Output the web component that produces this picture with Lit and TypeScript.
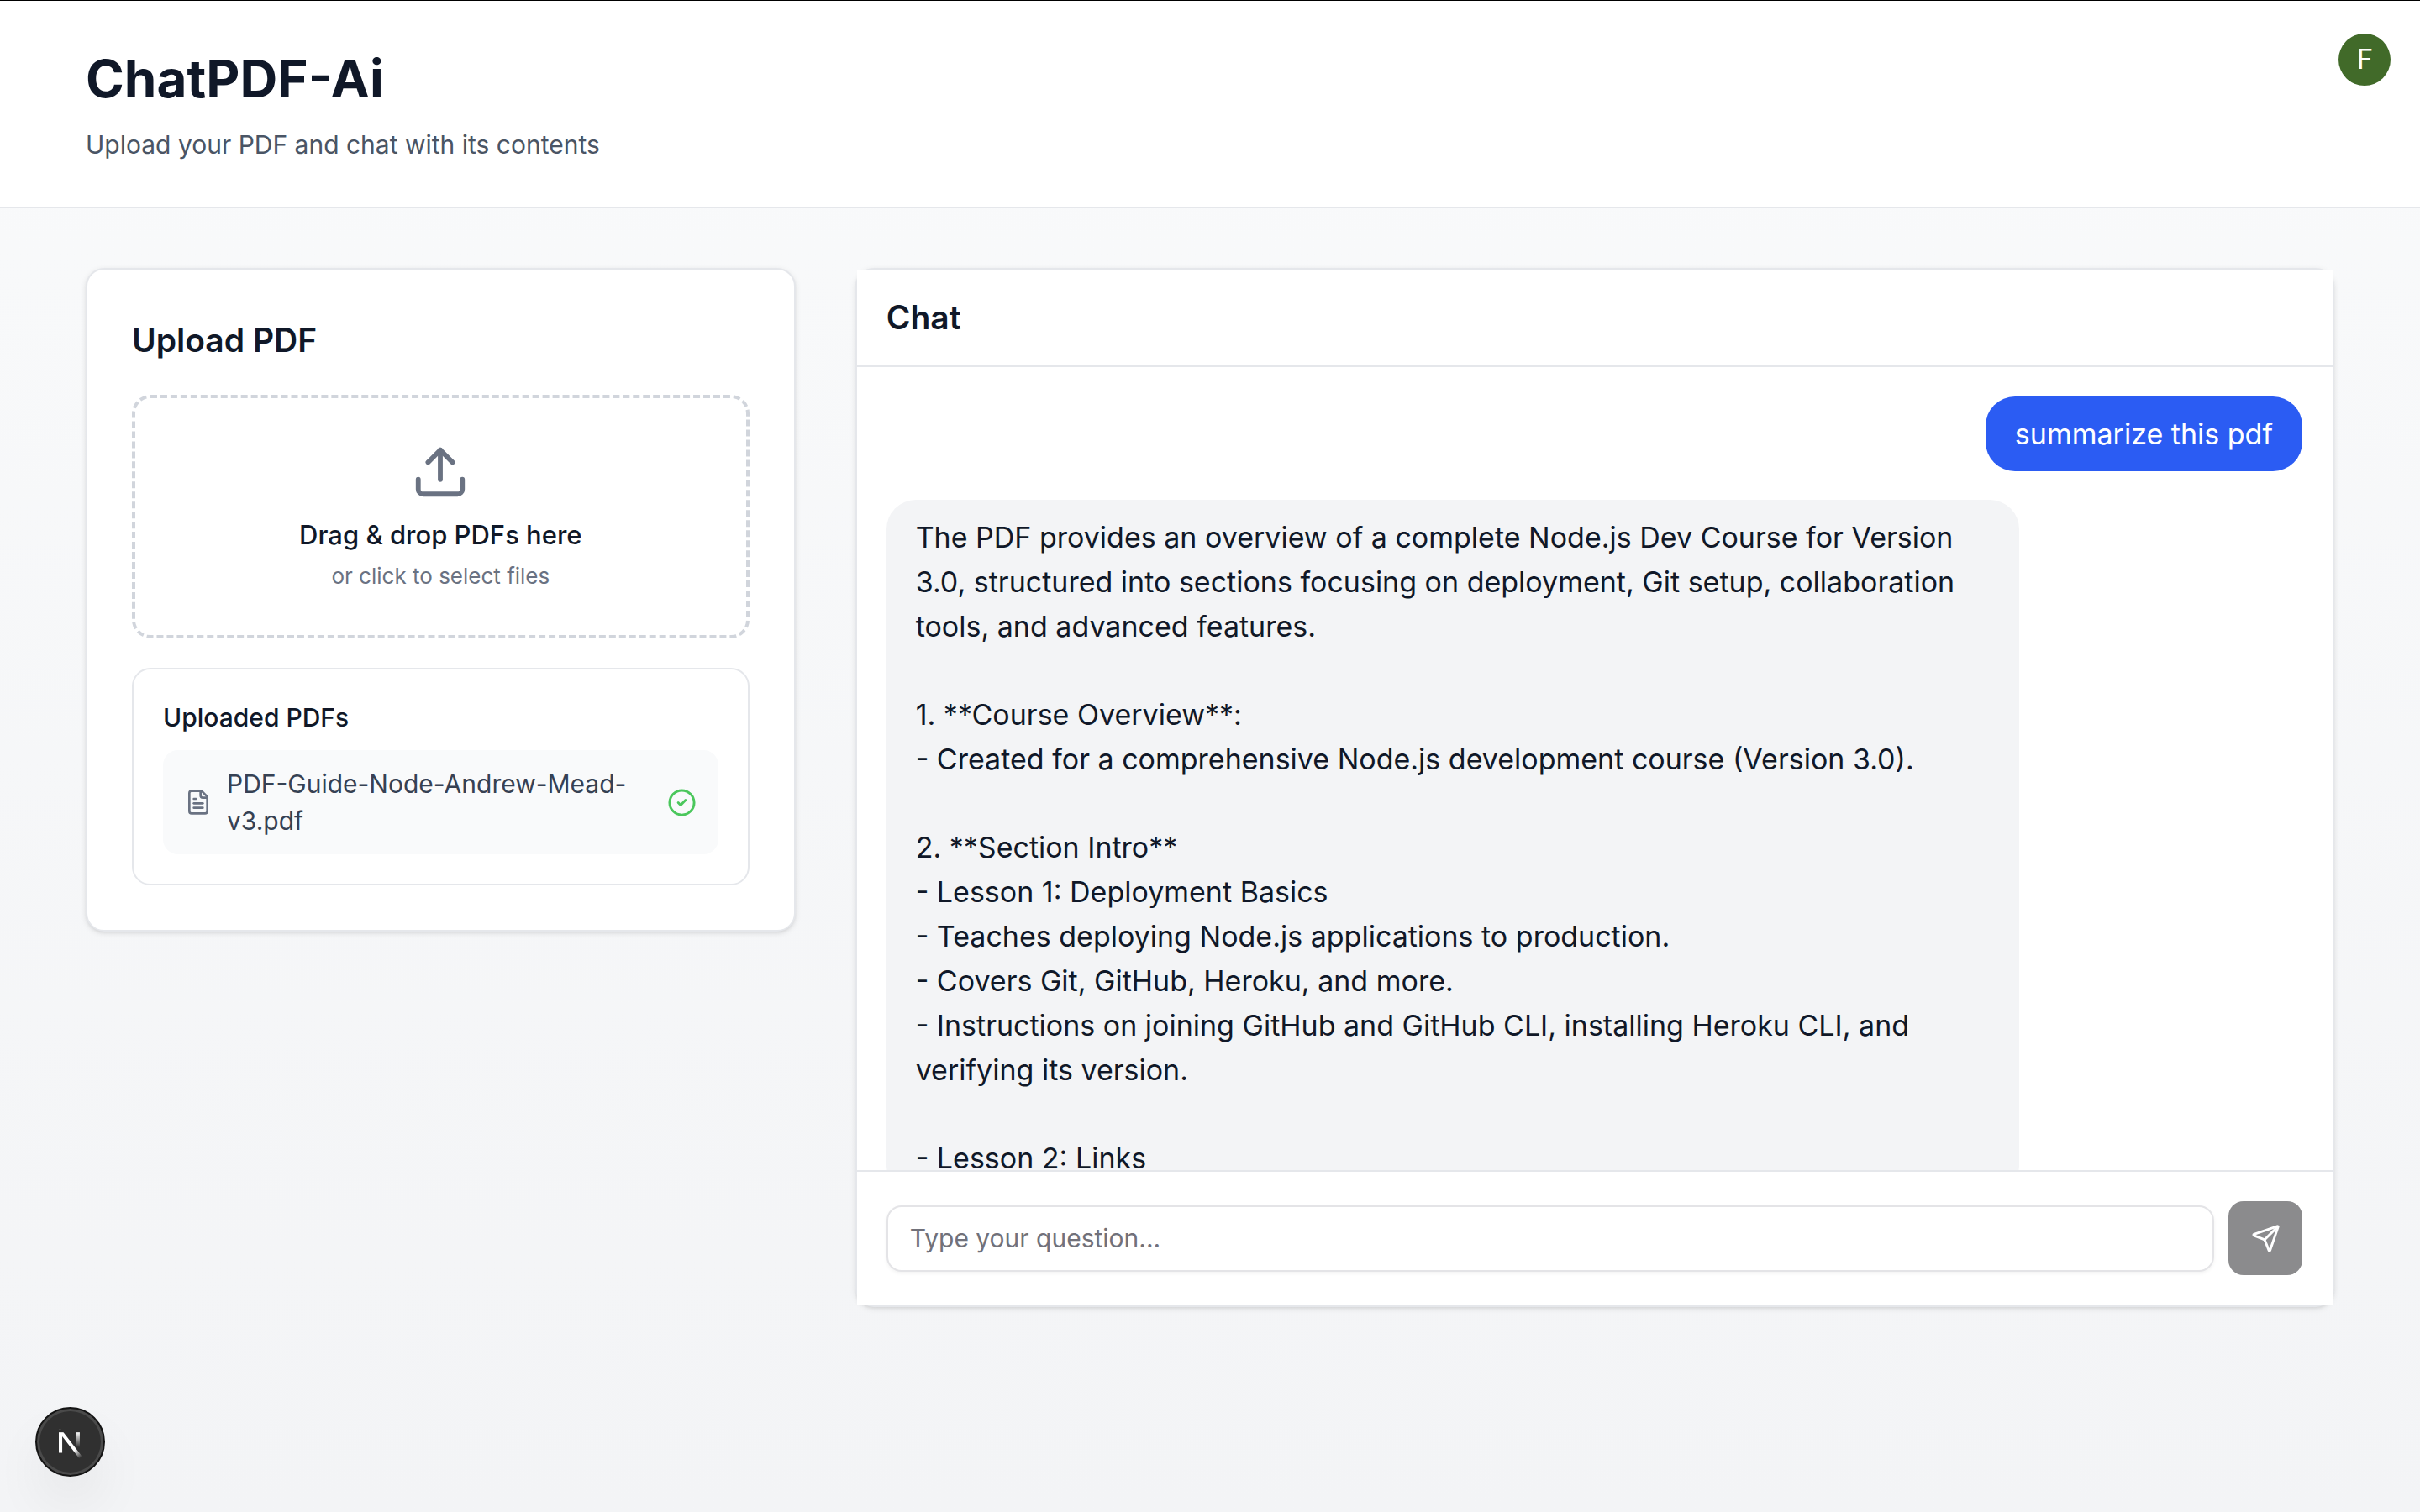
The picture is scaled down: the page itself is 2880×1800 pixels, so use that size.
import { LitElement, html, css, svg } from "lit";
import { customElement, property } from "lit/decorators.js";

const ICONS = {
  upload: svg`<path d="M12 3v12" /><path d="m17 8-5-5-5 5" /><path d="M21 15v4a2 2 0 0 1-2 2H5a2 2 0 0 1-2-2v-4" />`,
  file: svg`<path d="M15 2H6a2 2 0 0 0-2 2v16a2 2 0 0 0 2 2h12a2 2 0 0 0 2-2V7Z" /><path d="M14 2v4a2 2 0 0 0 2 2h4" /><path d="M10 9H8" /><path d="M16 13H8" /><path d="M16 17H8" />`,
  check: svg`<circle cx="12" cy="12" r="10" /><path d="m9 12 2 2 4-4" />`,
  send: svg`<path d="M14.536 21.686a.5.5 0 0 0 .937-.024l6.5-19a.496.496 0 0 0-.635-.635l-19 6.5a.5.5 0 0 0-.024.937l7.93 3.18a2 2 0 0 1 1.112 1.11z" /><path d="m21.854 2.147-10.94 10.939" />`,
};

type IconName = keyof typeof ICONS;

interface Message {
  role: "user" | "assistant";
  blocks: string[][];
}

const FILES = ["PDF-Guide-Node-Andrew-Mead-v3.pdf"];

const MESSAGES: Message[] = [
  { role: "user", blocks: [["summarize this pdf"]] },
  {
    role: "assistant",
    blocks: [
      [
        "The PDF provides an overview of a complete Node.js Dev Course for Version 3.0, structured into sections focusing on deployment, Git setup, collaboration tools, and advanced features.",
      ],
      [
        "1. **Course Overview**:",
        "- Created for a comprehensive Node.js development course (Version 3.0).",
      ],
      [
        "2. **Section Intro**",
        "- Lesson 1: Deployment Basics",
        "- Teaches deploying Node.js applications to production.",
        "- Covers Git, GitHub, Heroku, and more.",
        "- Instructions on joining GitHub and GitHub CLI, installing Heroku CLI, and verifying its version.",
      ],
      ["- Lesson 2: Links"],
    ],
  },
];

@customElement("line-icon")
class LineIcon extends LitElement {
  @property() name: IconName = "file";

  static styles = css`
    :host {
      display: block;
      flex: none;
    }
    svg {
      display: block;
      width: 100%;
      height: 100%;
      fill: none;
      stroke: currentColor;
      stroke-width: 2;
      stroke-linecap: round;
      stroke-linejoin: round;
    }
  `;

  render() {
    return html`<svg viewBox="0 0 24 24" aria-hidden="true">${ICONS[this.name]}</svg>`;
  }
}

@customElement("upload-panel")
class UploadPanel extends LitElement {
  static styles = css`
    :host {
      display: block;
      box-sizing: border-box;
      padding: 53px;
      border: 2px solid #e5e7eb;
      border-radius: 22px;
      background: #fff;
      box-shadow: 0 2px 7px rgba(0, 0, 0, 0.1), 0 2px 4px -2px rgba(0, 0, 0, 0.1);
    }
    h2,
    h3,
    ul {
      margin: 0;
      padding: 0;
      list-style: none;
    }
    .title {
      font-size: 39px;
      line-height: 61px;
      font-weight: 600;
    }
    .dropzone {
      position: relative;
      display: flex;
      flex-direction: column;
      align-items: center;
      margin-top: 35px;
      padding: 53px;
      border: 4px dashed #d1d5dc;
      border-radius: 22px;
      cursor: pointer;
    }
    .picker {
      position: absolute;
      inset: 0;
      width: 100%;
      height: 100%;
      opacity: 0;
      cursor: pointer;
    }
    .upload-icon {
      width: 70px;
      height: 70px;
      color: #6a7282;
    }
    .lead {
      margin-top: 18px;
      font-size: 31px;
      line-height: 44px;
      font-weight: 500;
    }
    .hint {
      margin-top: 9px;
      font-size: 26px;
      line-height: 35px;
      color: #6a7282;
    }
    .files {
      margin-top: 35px;
      padding: 35px;
      border: 2px solid #e5e7eb;
      border-radius: 22px;
    }
    .files-title {
      margin-bottom: 17px;
      font-size: 30px;
      line-height: 44px;
      font-weight: 500;
    }
    .file {
      display: flex;
      align-items: center;
      gap: 18px;
      padding: 18px 26px;
      border-radius: 18px;
      background: #f9fafb;
    }
    .file-icon {
      width: 32px;
      height: 32px;
      color: #6a7282;
    }
    .file-name {
      flex: 1;
      min-width: 0;
      font-size: 30px;
      line-height: 44px;
      color: #364153;
    }
    .ok-icon {
      width: 35px;
      height: 35px;
      color: #4bc75c;
    }
  `;

  render() {
    return html`
      <h2 class="title">Upload PDF</h2>
      <label class="dropzone">
        <line-icon class="upload-icon" name="upload"></line-icon>
        <span class="lead">Drag &amp; drop PDFs here</span>
        <span class="hint">or click to select files</span>
        <input class="picker" type="file" accept="application/pdf" multiple />
      </label>
      <section class="files">
        <h3 class="files-title">Uploaded PDFs</h3>
        <ul>
          ${FILES.map(
            (name) => html`<li class="file">
              <line-icon class="file-icon" name="file"></line-icon>
              <span class="file-name">${name}</span>
              <line-icon class="ok-icon" name="check"></line-icon>
            </li>`,
          )}
        </ul>
      </section>
    `;
  }
}

@customElement("chat-panel")
class ChatPanel extends LitElement {
  static styles = css`
    :host {
      display: flex;
      flex-direction: column;
      box-sizing: border-box;
      height: calc(100vh - 563px);
      border: 2px solid #e5e7eb;
      border-radius: 22px;
      background: #fff;
      box-shadow: 0 2px 7px rgba(0, 0, 0, 0.1), 0 2px 4px -2px rgba(0, 0, 0, 0.1);
    }
    .head {
      padding: 35px;
      border-bottom: 2px solid #e5e7eb;
      background: #fff;
    }
    .title {
      margin: 0;
      font-size: 39px;
      line-height: 44px;
      font-weight: 600;
    }
    .messages {
      flex: 1;
      min-height: 0;
      display: flex;
      flex-direction: column;
      gap: 34px;
      padding: 35px 36px 35px 35px;
      overflow-y: auto;
      scrollbar-width: none;
      background: #fff;
    }
    .message {
      display: flex;
      flex: none;
      flex-direction: column;
      gap: 52px;
      box-sizing: border-box;
      max-width: 80%;
      padding: 18px 35px;
      border-radius: 35px;
      font-size: 34px;
      line-height: 53px;
    }
    .user {
      align-self: flex-end;
      background: #2b5cf3;
      color: #fff;
    }
    .assistant {
      align-self: flex-start;
      width: 80%;
      background: #f3f4f6;
    }
    .line {
      margin: 0;
    }
    .composer {
      display: flex;
      align-items: center;
      gap: 17px;
      padding: 35px 36px 36px 35px;
      border-top: 2px solid #e5e7eb;
      background: #fff;
    }
    .question {
      flex: 1;
      min-width: 0;
      height: 79px;
      box-sizing: border-box;
      padding: 0 26px;
      border: 2px solid #e4e4e7;
      border-radius: 18px;
      background: #fff;
      box-shadow: 0 2px 4px rgba(0, 0, 0, 0.05);
      color: inherit;
      font: inherit;
      font-size: 30px;
      outline: none;
    }
    .question::placeholder {
      color: #71717a;
      opacity: 1;
    }
    .send {
      display: grid;
      place-items: center;
      width: 88px;
      height: 88px;
      padding: 0;
      border: 0;
      border-radius: 18px;
      background: #8b8b8d;
      color: #fff;
    }
    .send-icon {
      width: 35px;
      height: 35px;
    }
  `;

  render() {
    return html`
      <header class="head"><h2 class="title">Chat</h2></header>
      <div class="messages">
        ${MESSAGES.map(
          (message) => html`<article class="message ${message.role}">
            ${message.blocks.map(
              (lines) => html`<div class="block">
                ${lines.map((line) => html`<p class="line">${line}</p>`)}
              </div>`,
            )}
          </article>`,
        )}
      </div>
      <form class="composer" @submit=${(e: Event) => e.preventDefault()}>
        <input class="question" type="text" aria-label="Question" placeholder="Type your question..." />
        <button class="send" type="submit" aria-label="Send" disabled>
          <line-icon class="send-icon" name="send"></line-icon>
        </button>
      </form>
    `;
  }
}

@customElement("app-root")
class AppRoot extends LitElement {
  static styles = css`
    :host {
      display: block;
      box-sizing: border-box;
      min-height: 100vh;
      background: linear-gradient(to bottom, #f9fafb, #f3f4f6);
      color: #101828;
      font-family: Inter, "Liberation Sans", sans-serif;
    }
    .top {
      display: flex;
      justify-content: space-between;
      align-items: flex-start;
      padding: 39px 35px 52px 102px;
      border-top: 1px solid #000;
      border-bottom: 2px solid #e5e7eb;
      background: #fff;
    }
    .brand {
      padding-top: 14px;
    }
    .name {
      margin: 0;
      font-size: 62px;
      line-height: 79px;
      font-weight: 700;
    }
    .tagline {
      margin: 17px 0 0;
      font-size: 30px;
      line-height: 44px;
      color: #4a5565;
    }
    .avatar {
      width: 62px;
      height: 62px;
      padding: 0;
      border: 0;
      border-radius: 50%;
      background: #416a29;
      color: #fff;
      font-family: Roboto, sans-serif;
      font-size: 33px;
      line-height: 62px;
    }
    .content {
      display: grid;
      grid-template-columns: repeat(3, minmax(0, 1fr));
      align-items: start;
      gap: 71px;
      padding: 71px 102px;
    }
    .chat {
      grid-column: span 2;
    }
    .dev {
      position: fixed;
      left: 42px;
      bottom: 42px;
      display: grid;
      place-items: center;
      width: 83px;
      height: 83px;
      padding: 0;
      border: 2px solid #141414;
      border-radius: 50%;
      background: #303030;
      box-shadow: inset 0 0 0 3px #4a4a4a, 0 35px 70px -18px rgba(0, 0, 0, 0.16);
    }
    .dev-logo {
      display: block;
      width: 88px;
      height: 88px;
    }
  `;

  render() {
    return html`
      <header class="top">
        <div class="brand">
          <h1 class="name">ChatPDF-Ai</h1>
          <p class="tagline">Upload your PDF and chat with its contents</p>
        </div>
        <button class="avatar" type="button" aria-label="Account">F</button>
      </header>
      <main class="content">
        <upload-panel></upload-panel>
        <chat-panel class="chat"></chat-panel>
      </main>
      <button class="dev" type="button" aria-label="Developer tools">
        <svg class="dev-logo" viewBox="0 0 40 40" fill="none" aria-hidden="true">
          <defs>
            <linearGradient id="diagonal" x1="9.956" y1="11.123" x2="15.478" y2="17.967" gradientUnits="userSpaceOnUse">
              <stop stop-color="#fff" />
              <stop offset="0.604" stop-color="#fff" stop-opacity="0" />
            </linearGradient>
            <linearGradient id="stem" x1="11.822" y1="1.4" x2="11.793" y2="9.625" gradientUnits="userSpaceOnUse">
              <stop stop-color="#fff" />
              <stop offset="1" stop-color="#fff" stop-opacity="0" />
            </linearGradient>
            <mask id="corner">
              <rect width="100%" height="100%" fill="#fff" />
              <rect width="5" height="1.5" fill="#000" />
            </mask>
          </defs>
          <g transform="translate(10.4 11.3)">
            <path d="M13.3 15.2 L2.34 1 V12.6" stroke="url(#diagonal)" stroke-width="1.86" mask="url(#corner)" />
            <path d="M11.825 1.5 V13.1" stroke="url(#stem)" stroke-width="1.86" />
          </g>
        </svg>
      </button>
    `;
  }
}
